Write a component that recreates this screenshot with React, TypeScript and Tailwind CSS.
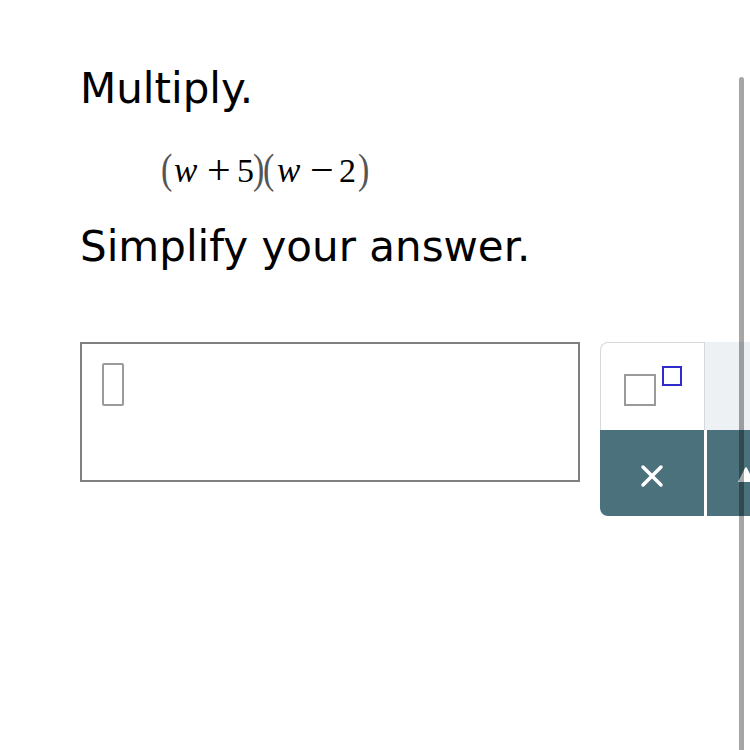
import React from 'react';

const sans = "font-['DejaVu_Sans',Verdana,sans-serif]";
const serif = "font-['Liberation_Serif','Times_New_Roman',serif]";

// one glyph of the expression, in a box as wide as the gap to the next glyph
const Glyph: React.FC<{ w: string; className?: string; children: React.ReactNode }> = ({ w, className, children }) => (
  <span className={`inline-block ${w} ${className ?? ''}`}>{children}</span>
);

const Paren: React.FC<{ w: string; children: React.ReactNode }> = ({ w, children }) => (
  <Glyph w={w} className="origin-[50%_70%] scale-y-[1.25] text-[#555]">
    {children}
  </Glyph>
);

const Expression: React.FC = () => (
  <div className={`ml-[81px] mt-[38px] flex h-[40px] items-baseline text-[34px] leading-[40px] text-black ${serif}`}>
    <Paren w="w-[13px]">(</Paren>
    <Glyph w="w-[30px]" className="text-[35px] italic">w</Glyph>
    <Glyph w="w-[33px]" className="relative top-[2px] pl-[3px] text-[42px]">+</Glyph>
    <Glyph w="w-[16px]" className="text-[34px]">5</Glyph>
    <Paren w="w-[10px]">)</Paren>
    <Paren w="w-[14px]">(</Paren>
    <Glyph w="w-[30px]" className="text-[35px] italic">w</Glyph>
    <Glyph w="w-[32px]" className="relative top-[2px] pl-[3px] text-[42px]">−</Glyph>
    <Glyph w="w-[19px]" className="text-[34px]">2</Glyph>
    <Paren w="w-[12px]">)</Paren>
  </div>
);

const AnswerBox: React.FC = () => (
  <div className="h-[140px] w-[500px] shrink-0 border-2 border-[#808080] bg-white pl-[20px] pt-[19px]">
    <div className="h-[43px] w-[22px] rounded-[2px] border-2 border-[#9a9a9a]" />
  </div>
);

const Toolbar: React.FC = () => (
  <div className="ml-[20px] flex w-[220px] shrink-0 flex-col">
    <div className="flex h-[88px]">
      <button className="relative h-full w-[105px] rounded-tl-[8px] border border-b-0 border-[#d3d9dc] bg-white">
        <span className="absolute left-[23px] top-[31px] h-[32px] w-[32px] border-2 border-[#9a9a9a]" />
        <span className="absolute left-[61px] top-[23px] h-[20px] w-[20px] border-2 border-[#2d2dcc]" />
      </button>
      <div className="h-full flex-1 bg-[#eef1f3]" />
    </div>
    <div className="flex h-[86px] rounded-bl-[8px] bg-[#4b727c]">
      <button className="flex w-[104px] items-center justify-center pt-[6px]">
        <svg width="24" height="24" viewBox="0 0 24 24" fill="none" stroke="white" strokeWidth="3.5" strokeLinecap="round">
          <path d="M3 3L21 21M21 3L3 21" />
        </svg>
      </button>
      <div className="w-[3px] bg-white" />
      <div className="flex flex-1 items-center pl-[30px] pt-[4px]">
        <svg width="18" height="18" viewBox="0 0 18 18">
          <path d="M1 16L8 2Q9 0.5 10 2L17 16Z" fill="white" />
        </svg>
      </div>
    </div>
  </div>
);

export default function App() {
  return (
    <div className="relative h-[750px] w-[750px] overflow-hidden bg-white">
      <div className="pl-[80px] pt-[68px]">
        <p className={`text-[42px] leading-[42px] text-black ${sans}`}>Multiply.</p>
        <Expression />
        <p className={`mt-[38px] text-[42px] leading-[42px] text-black ${sans}`}>Simplify your answer.</p>
        <div className="mt-[74px] flex items-start">
          <AnswerBox />
          <Toolbar />
        </div>
      </div>

      {/* scrollbar thumb over the page */}
      <div className="absolute left-[739px] top-[77px] h-[680px] w-[5px] rounded-full bg-black/35" />
    </div>
  );
}
